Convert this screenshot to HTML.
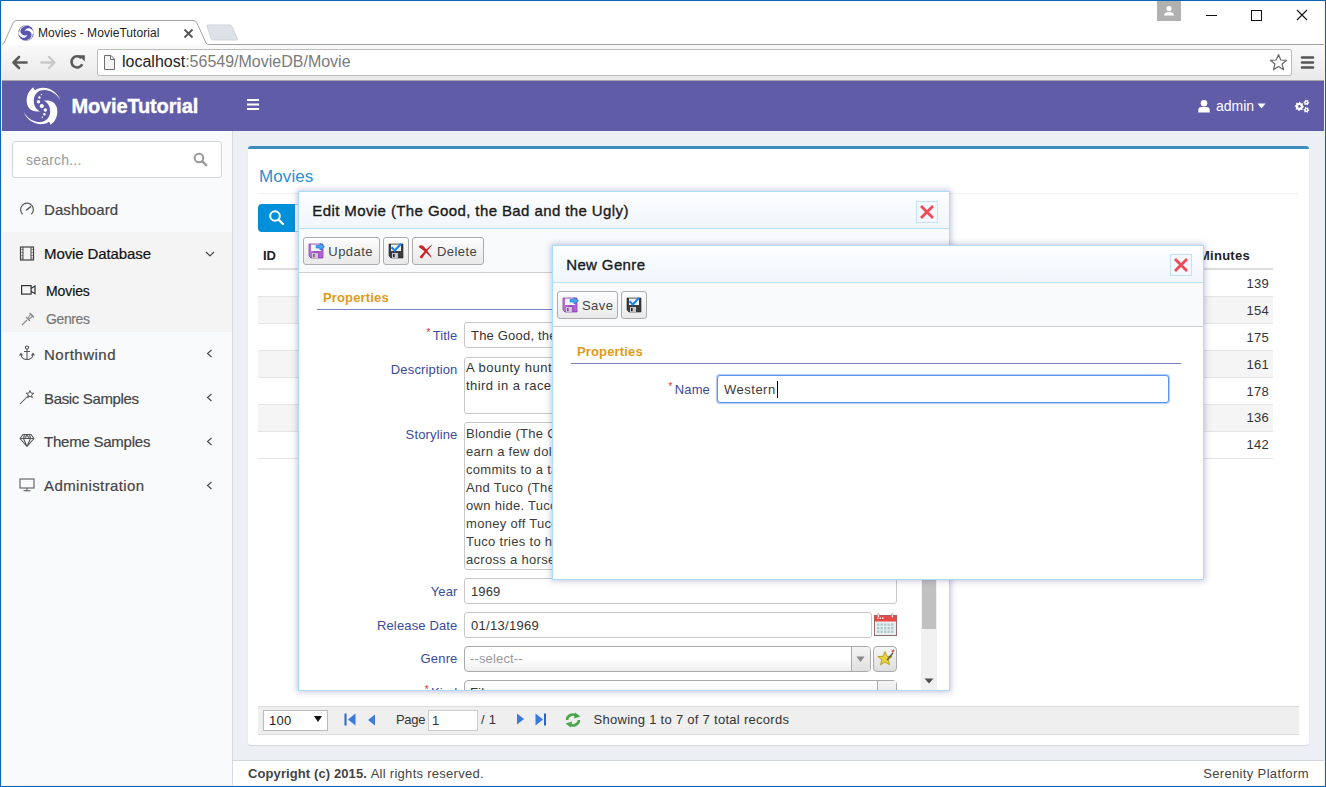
<!DOCTYPE html>
<html><head><meta charset="utf-8">
<style>
*{box-sizing:border-box;margin:0;padding:0}
html,body{width:1326px;height:787px;overflow:hidden;background:#fff;font-family:"Liberation Sans",sans-serif}
body{position:relative}
.a{position:absolute}
.t{position:absolute;white-space:nowrap;line-height:1}
</style></head>
<body>
<div class="a" style="left:0px;top:0px;width:1326px;height:44px;background:#fff"></div>
<svg class="a" style="left:0px;top:18px;" width="240" height="28" viewBox="0 0 240 28"><path d="M0,26.5 L1.5,26.5 Q3,26.5 4,25 L13.5,4 Q15,2.5 17,2.5 L193,2.5 Q195,2.5 196.5,4 L206,25 Q207,26.5 209,26.5 L240,26.5" fill="#fff" stroke="#a3a3a3" stroke-width="1"/><path d="M207,8 Q206,7 208,7 L229,7 Q231,7 232,8.5 L237,20 Q238,22 236,22 L214,22 Q212,22 211,20.5 Z" fill="#dde1e8" stroke="#cfd3da" stroke-width="1"/></svg>
<div class="a" style="left:240px;top:44px;width:1086px;height:1px;background:#a3a3a3"></div>
<svg class="a" style="left:18px;top:25px;" width="16" height="16" viewBox="0 0 16 16"><circle cx="8" cy="8" r="7.8" fill="#5a56ac"/><g transform="translate(0.2,0.2) scale(0.39) rotate(-60 20 20)"><path d="M11.3,1.2 C5.5,5.5 3.5,12.5 5.3,18.8 C6.8,23.5 11.5,26.3 18,25.3 C14,23.2 11.6,19.5 11.8,14.5 C12,9.5 14.6,6 18.5,4.6 C25.5,2.3 33.5,6.2 38.3,14 C35,5.5 26.5,1 19,2 C16.5,2.3 14.5,3.2 13,4.3 C12.2,3.2 11.6,2.2 11.3,1.2 Z" fill="#fff"/><path d="M11.3,1.2 C5.5,5.5 3.5,12.5 5.3,18.8 C6.8,23.5 11.5,26.3 18,25.3 C14,23.2 11.6,19.5 11.8,14.5 C12,9.5 14.6,6 18.5,4.6 C25.5,2.3 33.5,6.2 38.3,14 C35,5.5 26.5,1 19,2 C16.5,2.3 14.5,3.2 13,4.3 C12.2,3.2 11.6,2.2 11.3,1.2 Z" fill="#fff" transform="rotate(180 20 20)"/></g><circle cx="8" cy="8" r="1.6" fill="#5a56ac"/></svg>
<div class="t " style="top:27.14px;font-size:12px;color:#222;letter-spacing:0.05px;left:38px;">Movies - MovieTutorial</div>
<svg class="a" style="left:183px;top:28px;" width="11" height="11" viewBox="0 0 11 11"><path d="M1.5,1.5 L9.5,9.5 M9.5,1.5 L1.5,9.5" stroke="#555" stroke-width="1.8"/></svg>
<div class="a" style="left:1157px;top:1px;width:24px;height:20px;background:#b1b1b1"></div>
<svg class="a" style="left:1157px;top:1px;" width="24" height="20" viewBox="0 0 24 20"><circle cx="12" cy="7.5" r="2.6" fill="#fff"/><path d="M7,14.5 Q7,11 12,11 Q17,11 17,14.5 Z" fill="#fff"/></svg>
<div class="a" style="left:1206px;top:15px;width:11px;height:1px;background:#111"></div>
<div class="a" style="left:1251px;top:10px;width:11px;height:11px;border:1px solid #111"></div>
<svg class="a" style="left:1296px;top:9px;" width="12" height="12" viewBox="0 0 12 12"><path d="M1,1 L11,11 M11,1 L1,11" stroke="#111" stroke-width="1.1"/></svg>
<div class="a" style="left:2px;top:45px;width:1322px;height:35px;background:linear-gradient(#fafafa,#e9e9e9)"></div>
<div class="a" style="left:2px;top:80px;width:1322px;height:1px;background:#a8a8a8"></div>
<svg class="a" style="left:11px;top:55px;" width="17" height="15" viewBox="0 0 17 15"><path d="M15.5,7.5 L3,7.5 M8,2 L2.5,7.5 L8,13" fill="none" stroke="#5a5a5a" stroke-width="2.6" stroke-linecap="round" stroke-linejoin="round"/></svg>
<svg class="a" style="left:40px;top:55px;" width="17" height="15" viewBox="0 0 17 15"><path d="M1.5,7.5 L14,7.5 M9,2 L14.5,7.5 L9,13" fill="none" stroke="#c9c9c9" stroke-width="2.4" stroke-linecap="round" stroke-linejoin="round"/></svg>
<svg class="a" style="left:69px;top:54px;" width="17" height="16" viewBox="0 0 17 16"><path d="M13.2,10.2 A5.6,5.6 0 1 1 12.4,4.2" fill="none" stroke="#5a5a5a" stroke-width="2.6"/><path d="M9.5,1.2 L15.8,1.2 L15.8,7.5 Z" fill="#5a5a5a"/></svg>
<div class="a" style="left:97px;top:49px;width:1195px;height:27px;background:#fff;border:1px solid #bcbcbc;border-radius:2px"></div>
<svg class="a" style="left:103px;top:54px;" width="13" height="17" viewBox="0 0 13 17"><path d="M1.5,1.5 L8,1.5 L11.5,5 L11.5,15.5 L1.5,15.5 Z" fill="#f4f4f4" stroke="#6e6e6e" stroke-width="1"/><path d="M7.5,1.5 L7.5,5.5 L11.5,5.5" fill="none" stroke="#6e6e6e" stroke-width="1"/></svg>
<div class="t " style="top:54.06px;font-size:16px;color:#222;left:122px;"><span style="color:#222">localhost</span><span style="color:#7b7b7b">:56549/MovieDB/Movie</span></div>
<svg class="a" style="left:1269px;top:53px;" width="19" height="19" viewBox="0 0 19 19"><path d="M9.5,1.5 L11.8,7 L17.7,7.3 L13.1,11 L14.6,16.8 L9.5,13.6 L4.4,16.8 L5.9,11 L1.3,7.3 L7.2,7 Z" fill="none" stroke="#6a6a6a" stroke-width="1.2" stroke-linejoin="round"/></svg>
<svg class="a" style="left:1300px;top:55px;" width="15" height="15" viewBox="0 0 15 15"><path d="M2,2.5 L13,2.5 M2,7.5 L13,7.5 M2,12.5 L13,12.5" stroke="#555" stroke-width="2.6" stroke-linecap="round"/></svg>
<div class="a" style="left:2px;top:81px;width:1322px;height:50px;background:#605ca8"></div>
<svg class="a" style="left:22px;top:86px;" width="40" height="40" viewBox="0 0 40 40"><g fill="#fff"><path d="M11.3,1.2 C5.5,5.5 3.5,12.5 5.3,18.8 C6.8,23.5 11.5,26.3 18,25.3 C14,23.2 11.6,19.5 11.8,14.5 C12,9.5 14.6,6 18.5,4.6 C25.5,2.3 33.5,6.2 38.3,14 C35,5.5 26.5,1 19,2 C16.5,2.3 14.5,3.2 13,4.3 C12.2,3.2 11.6,2.2 11.3,1.2 Z"/><path d="M11.3,1.2 C5.5,5.5 3.5,12.5 5.3,18.8 C6.8,23.5 11.5,26.3 18,25.3 C14,23.2 11.6,19.5 11.8,14.5 C12,9.5 14.6,6 18.5,4.6 C25.5,2.3 33.5,6.2 38.3,14 C35,5.5 26.5,1 19,2 C16.5,2.3 14.5,3.2 13,4.3 C12.2,3.2 11.6,2.2 11.3,1.2 Z" transform="rotate(180 20 20)"/><circle cx="19.8" cy="20.1" r="2.1"/><circle cx="16.5" cy="15.8" r="1.7"/><circle cx="23.3" cy="24" r="1.7"/><circle cx="17.4" cy="11.5" r="1.2"/><circle cx="22.4" cy="28.2" r="1.2"/><circle cx="19.5" cy="8.5" r="0.75"/><circle cx="20.3" cy="31.3" r="0.75"/></g></svg>
<div class="t " style="top:95.57px;font-size:20px;color:#fff;font-weight:bold;letter-spacing:-0.15px;left:71.5px;-webkit-text-stroke:0.4px #fff;">MovieTutorial</div>
<svg class="a" style="left:246px;top:98px;" width="14" height="13" viewBox="0 0 14 13"><path d="M1,2 L13,2 M1,6.5 L13,6.5 M1,11 L13,11" stroke="#fff" stroke-width="2"/></svg>
<svg class="a" style="left:1197px;top:99px;" width="14" height="14" viewBox="0 0 14 14"><circle cx="7" cy="4.2" r="3.3" fill="#fff"/><path d="M1.3,13.5 L1.3,11 Q1.3,8 4.5,8 L9.5,8 Q12.7,8 12.7,11 L12.7,13.5 Z" fill="#fff"/></svg>
<div class="t " style="top:99.15px;font-size:14px;color:#fff;left:1216px;">admin</div>
<svg class="a" style="left:1257px;top:103px;" width="9" height="6" viewBox="0 0 9 6"><path d="M0.5,0.5 L8.5,0.5 L4.5,5.5 Z" fill="#fff"/></svg>
<svg class="a" style="left:1293px;top:98px;" width="18" height="18" viewBox="0 0 18 18"><polygon points="11.00,8.40 10.91,9.30 9.63,9.74 9.31,10.34 9.65,11.65 8.96,12.22 7.74,11.63 7.08,11.83 6.40,13.00 5.50,12.91 5.06,11.63 4.46,11.31 3.15,11.65 2.58,10.96 3.17,9.74 2.97,9.08 1.80,8.40 1.89,7.50 3.17,7.06 3.49,6.46 3.15,5.15 3.84,4.58 5.06,5.17 5.72,4.97 6.40,3.80 7.30,3.89 7.74,5.17 8.34,5.49 9.65,5.15 10.22,5.84 9.63,7.06 9.83,7.72" fill="#fff"/><circle cx="6.4" cy="8.4" r="3.2" fill="#fff"/><circle cx="6.4" cy="8.4" r="1.3" fill="#605ca8"/><polygon points="16.30,4.50 16.20,5.25 15.22,5.55 14.88,5.98 14.85,7.01 14.15,7.30 13.40,6.60 12.86,6.53 11.95,7.01 11.35,6.55 11.58,5.55 11.37,5.04 10.50,4.50 10.60,3.75 11.58,3.45 11.92,3.02 11.95,1.99 12.65,1.70 13.40,2.40 13.94,2.47 14.85,1.99 15.45,2.45 15.22,3.45 15.43,3.96" fill="#fff"/><circle cx="13.4" cy="4.5" r="1.8" fill="#fff"/><circle cx="13.4" cy="4.5" r="0.8" fill="#605ca8"/><polygon points="16.30,11.90 16.20,12.65 15.22,12.95 14.88,13.38 14.85,14.41 14.15,14.70 13.40,14.00 12.86,13.93 11.95,14.41 11.35,13.95 11.58,12.95 11.37,12.44 10.50,11.90 10.60,11.15 11.58,10.85 11.92,10.42 11.95,9.39 12.65,9.10 13.40,9.80 13.94,9.87 14.85,9.39 15.45,9.85 15.22,10.85 15.43,11.36" fill="#fff"/><circle cx="13.4" cy="11.9" r="1.8" fill="#fff"/><circle cx="13.4" cy="11.9" r="0.8" fill="#605ca8"/></svg>
<div class="a" style="left:2px;top:131px;width:230px;height:656px;background:#f9fafc"></div>
<div class="a" style="left:232px;top:131px;width:1px;height:656px;background:#d5d9e0"></div>
<div class="a" style="left:2px;top:232px;width:230px;height:100px;background:#f4f4f5"></div>
<div class="a" style="left:12px;top:141px;width:210px;height:37px;background:#fff;border:1px solid #d2d6de;border-radius:3px"></div>
<div class="t " style="top:152.65px;font-size:14px;color:#999;letter-spacing:0.2px;left:26px;">search...</div>
<svg class="a" style="left:193px;top:152px;" width="15" height="15" viewBox="0 0 15 15"><circle cx="6" cy="6" r="4.3" fill="none" stroke="#999" stroke-width="2"/><path d="M9.3,9.3 L13.2,13.2" stroke="#999" stroke-width="2.4" stroke-linecap="round"/></svg>
<div class="t " style="top:201.80px;font-size:15px;color:#444;letter-spacing:0.1px;left:44px;-webkit-text-stroke:0.2px #444;">Dashboard</div>
<div class="t " style="top:246.30px;font-size:15px;color:#111;letter-spacing:-0.1px;left:44px;-webkit-text-stroke:0.2px #111;">Movie Database</div>
<div class="t " style="top:283.55px;font-size:14px;color:#111;letter-spacing:-0.1px;left:46px;-webkit-text-stroke:0.2px #111;">Movies</div>
<div class="t " style="top:311.55px;font-size:14px;color:#777;letter-spacing:-0.4px;left:46px;-webkit-text-stroke:0.2px #777;">Genres</div>
<div class="t " style="top:346.60px;font-size:15px;color:#444;letter-spacing:0.5px;left:44px;-webkit-text-stroke:0.2px #444;">Northwind</div>
<div class="t " style="top:390.60px;font-size:15px;color:#444;letter-spacing:-0.35px;left:44px;-webkit-text-stroke:0.2px #444;">Basic Samples</div>
<div class="t " style="top:434.30px;font-size:15px;color:#444;letter-spacing:-0.23px;left:44px;-webkit-text-stroke:0.2px #444;">Theme Samples</div>
<div class="t " style="top:478.30px;font-size:15px;color:#444;letter-spacing:0.39px;left:44px;-webkit-text-stroke:0.2px #444;">Administration</div>
<svg class="a" style="left:19px;top:201px;" width="16" height="15" viewBox="0 0 16 15"><path d="M3.6,13.2 A6.4,6.4 0 1 1 12.4,13.2" fill="none" stroke="#555" stroke-width="1.2"/><path d="M7.5,9 L11.5,5.8" stroke="#555" stroke-width="1.5" stroke-linecap="round"/></svg>
<svg class="a" style="left:19px;top:246px;" width="16" height="15" viewBox="0 0 16 15"><rect x="1.5" y="1" width="13" height="13" fill="none" stroke="#444" stroke-width="1.2"/><path d="M4,1 L4,14 M12,1 L12,14" stroke="#444" stroke-width="1"/><path d="M2.5,3.5 L3.5,3.5 M2.5,6.5 L3.5,6.5 M2.5,9.5 L3.5,9.5 M2.5,12 L3.5,12 M12.5,3.5 L13.5,3.5 M12.5,6.5 L13.5,6.5 M12.5,9.5 L13.5,9.5 M12.5,12 L13.5,12" stroke="#444" stroke-width="1"/></svg>
<svg class="a" style="left:21px;top:285px;" width="15" height="10" viewBox="0 0 15 10"><rect x="0.6" y="0.6" width="9.5" height="8.5" fill="none" stroke="#333" stroke-width="1.2"/><path d="M10,3.5 L14,1 L14,8.7 L10,6.2" fill="none" stroke="#333" stroke-width="1.2"/></svg>
<svg class="a" style="left:21px;top:311px;" width="15" height="15" viewBox="0 0 15 15"><path d="M1,14 L6,9 M5,6 L9,10 M6.5,7.5 L10,3 L12,5 L7.5,8.5 M8.5,2 L13,6.5" fill="none" stroke="#888" stroke-width="1.1"/></svg>
<svg class="a" style="left:19px;top:345px;" width="16" height="16" viewBox="0 0 16 16"><circle cx="8" cy="2.6" r="1.6" fill="none" stroke="#555" stroke-width="1.1"/><path d="M8,4.2 L8,14.5 M5,6.5 L11,6.5 M2,9.5 Q2.5,14.5 8,14.5 Q13.5,14.5 14,9.5" fill="none" stroke="#555" stroke-width="1.05"/><path d="M0.5,10.5 L2,8.5 L3.5,10.5 M12.5,10.5 L14,8.5 L15.5,10.5" fill="none" stroke="#555" stroke-width="1.1"/></svg>
<svg class="a" style="left:19px;top:389px;" width="16" height="16" viewBox="0 0 16 16"><path d="M1,15 L9.5,6.5" stroke="#555" stroke-width="1.05"/><path d="M11,1.5 L12,4 L14.8,4.3 L12.6,6 L13.3,8.7 L11,7.2 L8.7,8.7 L9.4,6 L7.2,4.3 L10,4 Z" fill="none" stroke="#555" stroke-width="1"/></svg>
<svg class="a" style="left:19px;top:433px;" width="16" height="15" viewBox="0 0 16 15"><path d="M4,1.5 L12,1.5 L15,5.5 L8,13.5 L1,5.5 Z M1,5.5 L15,5.5 M5.5,1.5 L4.5,5.5 L8,13.5 L11.5,5.5 L10.5,1.5 M8,1.5 L6,5.5 M8,1.5 L10,5.5" fill="none" stroke="#555" stroke-width="1.1" stroke-linejoin="round"/></svg>
<svg class="a" style="left:19px;top:478px;" width="16" height="14" viewBox="0 0 16 14"><rect x="1" y="1" width="14" height="9" fill="none" stroke="#555" stroke-width="1.05"/><path d="M8,10 L8,12.5 M4.5,12.8 L11.5,12.8" stroke="#555" stroke-width="1.05"/></svg>
<svg class="a" style="left:205px;top:251px;" width="10" height="7" viewBox="0 0 10 7"><path d="M1,1 L5,5 L9,1" fill="none" stroke="#444" stroke-width="1.1"/></svg>
<svg class="a" style="left:206px;top:349px;" width="7" height="9" viewBox="0 0 7 9"><path d="M5.5,1 L1.5,4.5 L5.5,8" fill="none" stroke="#444" stroke-width="1.1"/></svg>
<svg class="a" style="left:206px;top:393px;" width="7" height="9" viewBox="0 0 7 9"><path d="M5.5,1 L1.5,4.5 L5.5,8" fill="none" stroke="#444" stroke-width="1.1"/></svg>
<svg class="a" style="left:206px;top:437px;" width="7" height="9" viewBox="0 0 7 9"><path d="M5.5,1 L1.5,4.5 L5.5,8" fill="none" stroke="#444" stroke-width="1.1"/></svg>
<svg class="a" style="left:206px;top:481px;" width="7" height="9" viewBox="0 0 7 9"><path d="M5.5,1 L1.5,4.5 L5.5,8" fill="none" stroke="#444" stroke-width="1.1"/></svg>
<div class="a" style="left:233px;top:131px;width:1091px;height:629px;background:#ecf0f5"></div>
<div class="a" style="left:248px;top:146px;width:1061px;height:599px;background:#fff;border-top:3px solid #3c8dbc;border-radius:3px;box-shadow:0 1px 1px rgba(0,0,0,0.1)"></div>
<div class="t " style="top:167.61px;font-size:17px;color:#2a8fd6;letter-spacing:0.1px;left:259px;">Movies</div>
<div class="a" style="left:258px;top:193px;width:1041px;height:1px;background:#f0f0f0"></div>
<div class="a" style="left:294px;top:204px;width:120px;height:28px;background:#fff;border:1px solid #ccc"></div>
<div class="a" style="left:258px;top:204px;width:37px;height:28px;background:#0090d9;border-radius:4px 0 0 4px"></div>
<svg class="a" style="left:267.5px;top:209px;" width="18" height="18" viewBox="0 0 18 18"><circle cx="7" cy="7" r="4.8" fill="none" stroke="#fff" stroke-width="2"/><path d="M10.5,10.5 L15,15" stroke="#fff" stroke-width="2.4" stroke-linecap="round"/></svg>
<div class="t " style="top:249.00px;font-size:13px;color:#222;font-weight:bold;left:263px;">ID</div>
<div class="t " style="top:249.00px;font-size:13px;color:#222;font-weight:bold;letter-spacing:0.25px;left:1199px;">Minutes</div>
<div class="a" style="left:258px;top:268px;width:1015px;height:2px;background:#ddd"></div>
<div class="a" style="left:258px;top:270px;width:1015px;height:27px;background:#fff;border-bottom:1px solid #e4e4e4"></div>
<div class="a" style="left:258px;top:297px;width:1015px;height:27px;background:#f5f5f5;border-bottom:1px solid #e4e4e4"></div>
<div class="a" style="left:258px;top:324px;width:1015px;height:27px;background:#fff;border-bottom:1px solid #e4e4e4"></div>
<div class="a" style="left:258px;top:351px;width:1015px;height:27px;background:#f5f5f5;border-bottom:1px solid #e4e4e4"></div>
<div class="a" style="left:258px;top:378px;width:1015px;height:27px;background:#fff;border-bottom:1px solid #e4e4e4"></div>
<div class="a" style="left:258px;top:405px;width:1015px;height:27px;background:#f5f5f5;border-bottom:1px solid #e4e4e4"></div>
<div class="a" style="left:258px;top:432px;width:1015px;height:27px;background:#fff;border-bottom:1px solid #e4e4e4"></div>
<div class="t " style="top:276.90px;font-size:13px;color:#333;letter-spacing:0.3px;right:57.00px;">139</div>
<div class="t " style="top:303.80px;font-size:13px;color:#333;letter-spacing:0.3px;right:57.00px;">154</div>
<div class="t " style="top:330.70px;font-size:13px;color:#333;letter-spacing:0.3px;right:57.00px;">175</div>
<div class="t " style="top:357.60px;font-size:13px;color:#333;letter-spacing:0.3px;right:57.00px;">161</div>
<div class="t " style="top:384.50px;font-size:13px;color:#333;letter-spacing:0.3px;right:57.00px;">178</div>
<div class="t " style="top:411.40px;font-size:13px;color:#333;letter-spacing:0.3px;right:57.00px;">136</div>
<div class="t " style="top:438.30px;font-size:13px;color:#333;letter-spacing:0.3px;right:57.00px;">142</div>
<div class="a" style="left:258px;top:706px;width:1041px;height:29px;background:#efefef;border-top:1px solid #ddd;border-bottom:1px solid #ddd"></div>
<div class="a" style="left:263px;top:710px;width:65px;height:21px;background:#fff;border:1px solid #bbb"></div>
<div class="t " style="top:714.00px;font-size:13px;color:#222;letter-spacing:0.3px;left:269px;">100</div>
<svg class="a" style="left:314px;top:716px;" width="8" height="6" viewBox="0 0 8 6"><path d="M0,0 L8,0 L4,6 Z" fill="#111"/></svg>
<svg class="a" style="left:344px;top:713px;" width="12" height="13" viewBox="0 0 12 13"><rect x="0.5" y="0.5" width="2" height="12" fill="#2a64c8"/><path d="M11.5,0.5 L4,6.5 L11.5,12.5 Z" fill="#3a7ae0"/></svg>
<svg class="a" style="left:367px;top:714px;" width="9" height="12" viewBox="0 0 9 12"><path d="M8,0.5 L1,6 L8,11.5 Z" fill="#3a7ae0"/></svg>
<div class="t " style="top:713.00px;font-size:13px;color:#333;letter-spacing:-0.3px;left:396px;">Page</div>
<div class="a" style="left:428px;top:710px;width:50px;height:21px;background:#fff;border:1px solid #ccc"></div>
<div class="t " style="top:714.00px;font-size:13px;color:#333;left:432px;">1</div>
<div class="t " style="top:713.00px;font-size:13px;color:#333;letter-spacing:0.3px;left:481px;">/ 1</div>
<svg class="a" style="left:516px;top:713px;" width="9" height="12" viewBox="0 0 9 12"><path d="M1,0.5 L8,6 L1,11.5 Z" fill="#3a7ae0"/></svg>
<svg class="a" style="left:535px;top:713px;" width="12" height="13" viewBox="0 0 12 13"><path d="M0.5,0.5 L8,6.5 L0.5,12.5 Z" fill="#3a7ae0"/><rect x="9" y="0.5" width="2" height="12" fill="#2a64c8"/></svg>
<svg class="a" style="left:564px;top:712px;" width="18" height="16" viewBox="0 0 18 16"><path d="M3,8 A6,5.5 0 0 1 13,4" fill="none" stroke="#4aa64a" stroke-width="2.6"/><path d="M11,0.5 L16.5,4.5 L10,6.5 Z" fill="#4aa64a"/><path d="M15,8 A6,5.5 0 0 1 5,12" fill="none" stroke="#4aa64a" stroke-width="2.6"/><path d="M7,15.5 L1.5,11.5 L8,9.5 Z" fill="#4aa64a"/></svg>
<div class="t " style="top:712.70px;font-size:13px;color:#333;letter-spacing:0.28px;left:593.5px;">Showing 1 to 7 of 7 total records</div>
<div class="a" style="left:233px;top:760px;width:1091px;height:1px;background:#d2d6de"></div>
<div class="a" style="left:233px;top:761px;width:1091px;height:25px;background:#fff"></div>
<div class="t " style="top:766.50px;font-size:13px;color:#444;letter-spacing:0.1px;left:248px;"><b>Copyright (c) 2015.</b> <span style="letter-spacing:0.28px">All rights reserved.</span></div>
<div class="t " style="top:766.50px;font-size:13px;color:#444;letter-spacing:0.35px;right:17.20px;">Serenity Platform</div>
<div class="a" style="left:0;top:0;width:1326px;height:787px;z-index:10">
<div class="a" style="left:298px;top:191px;width:652px;height:500px;background:#fff;border:1px solid #a8dcf8;box-shadow:0 0 6px 1px rgba(70,70,150,0.32)"></div>
<div class="a" style="left:299px;top:192px;width:650px;height:36px;background:linear-gradient(#fdfeff,#f0f6fc)"></div>
<div class="a" style="left:299px;top:228px;width:650px;height:1px;background:#b8e0f8"></div>
<div class="a" style="left:299px;top:229px;width:650px;height:43px;background:#f9fafc"></div>
<div class="a" style="left:299px;top:272px;width:650px;height:1px;background:#cfcfcf"></div>
<div class="t " style="top:203.10px;font-size:15px;color:#1a1a1a;letter-spacing:0.4px;left:312.3px;-webkit-text-stroke:0.35px #1a1a1a;">Edit Movie (The Good, the Bad and the Ugly)</div>
<div class="a" style="left:916px;top:201px;width:22px;height:22px;background:#f2f8fd;border:1px solid #c5e1f5"></div>
<svg class="a" style="left:920px;top:205px;" width="14" height="14" viewBox="0 0 14 14"><path d="M2,2 L12,12 M12,2 L2,12" stroke="#f04a55" stroke-width="2.8" stroke-linecap="square"/></svg>
<div class="a" style="left:303px;top:237px;width:77px;height:28px;background:linear-gradient(#fdfdfd,#e9e9e9);border:1px solid #adadad;border-radius:3px"></div>
<svg class="a" style="left:308px;top:243px;" width="17" height="16" viewBox="0 0 17 16"><defs><linearGradient id="fp" x1="0" x2="1"><stop offset="0" stop-color="#c27ee0"/><stop offset="0.5" stop-color="#9a48bf"/><stop offset="1" stop-color="#b86ed8"/></linearGradient></defs><path d="M1,1 L15,1 L15,15 L3,15 L1,13 Z" fill="url(#fp)" stroke="#7a2fa0" stroke-width="0.7"/><rect x="3" y="1.5" width="10" height="6.5" fill="#eef5f4"/><rect x="4" y="10" width="6" height="5" fill="#c9c9cf"/><rect x="5" y="11" width="1.6" height="3.2" fill="#9040b0"/><path d="M8.2,2.4 L12,2.4 L12,0.5 L16.5,3.7 L12,7 L12,5 L8.2,5 Z" fill="#46aaf2" stroke="#1f6fd0" stroke-width="0.7"/></svg>
<div class="t " style="top:244.70px;font-size:13px;color:#444;letter-spacing:0.45px;left:328.3px;">Update</div>
<div class="a" style="left:383px;top:237px;width:26px;height:28px;background:linear-gradient(#fdfdfd,#e9e9e9);border:1px solid #adadad;border-radius:3px"></div>
<svg class="a" style="left:388px;top:243px;" width="16" height="16" viewBox="0 0 16 16"><path d="M1,1 L15,1 L15,15 L3,15 L1,13 Z" fill="#3c3c3c" stroke="#222" stroke-width="0.6"/><rect x="3" y="1.5" width="10" height="6.5" fill="#eef6f6"/><rect x="4" y="10" width="6" height="5" fill="#c8c8d2"/><rect x="5" y="11" width="1.6" height="3.2" fill="#202020"/><path d="M3.5,4.2 L6.8,7.5 L13,0.8" fill="none" stroke="#1a80f0" stroke-width="2"/></svg>
<div class="a" style="left:412px;top:237px;width:72px;height:28px;background:linear-gradient(#fdfdfd,#e9e9e9);border:1px solid #adadad;border-radius:3px"></div>
<svg class="a" style="left:418px;top:244px;" width="16" height="16" viewBox="0 0 16 16"><path d="M1.8,12.8 Q6.5,6.5 13.6,0.8 L14,1.3 Q8.5,7.5 4.2,14.2 Q2.5,14.8 1.8,12.8 Z" fill="#d41e22"/><path d="M0.8,2.6 Q2.5,0.3 5,1.8 Q9.5,6 13.6,13.2 L13,13.5 Q8,8.2 2.8,4.6 Q0.8,3.8 0.8,2.6 Z" fill="#c4262a"/></svg>
<div class="t " style="top:244.70px;font-size:13px;color:#444;letter-spacing:0.45px;left:437px;">Delete</div>
<div class="a" style="left:299px;top:273px;width:650px;height:417px;overflow:hidden;background:#fff">
<div class="t " style="top:18.00px;font-size:13px;color:#e09a1a;font-weight:bold;letter-spacing:0.15px;left:24px;">Properties</div>
<div class="a" style="left:18px;top:36px;width:610px;height:1px;background:#7a80c8"></div>
<div class="t" style="left:-41.5px;width:200px;text-align:right;top:56.00px;font-size:13px;color:#3b4a9e;letter-spacing:0.15px"><span style="color:#e53b3b;font-size:11px;position:relative;top:-4px;margin-right:2px">*</span>Title</div>
<div class="t" style="left:-41.5px;width:200px;text-align:right;top:89.60px;font-size:13px;color:#3b4a9e;letter-spacing:0.15px">Description</div>
<div class="t" style="left:-41.5px;width:200px;text-align:right;top:155.00px;font-size:13px;color:#3b4a9e;letter-spacing:0.15px">Storyline</div>
<div class="t" style="left:-41.5px;width:200px;text-align:right;top:311.60px;font-size:13px;color:#3b4a9e;letter-spacing:0.15px">Year</div>
<div class="t" style="left:-41.5px;width:200px;text-align:right;top:345.50px;font-size:13px;color:#3b4a9e;letter-spacing:0.15px">Release Date</div>
<div class="t" style="left:-41.5px;width:200px;text-align:right;top:379.30px;font-size:13px;color:#3b4a9e;letter-spacing:0.15px">Genre</div>
<div class="t" style="left:-41.5px;width:200px;text-align:right;top:413.20px;font-size:13px;color:#3b4a9e;letter-spacing:0.15px"><span style="color:#e53b3b;font-size:11px;position:relative;top:-4px;margin-right:2px">*</span>Kind</div>
<div class="a" style="left:165px;top:49px;width:433px;height:26px;background:#fff;border:1px solid #c8c8c8;border-radius:3px"></div>
<div class="t " style="top:56.00px;font-size:13px;color:#333;letter-spacing:0.2px;left:172px;">The Good, the Bad and the Ugly</div>
<div class="a" style="left:165px;top:84px;width:433px;height:57px;background:#fff;border:1px solid #c8c8c8;border-radius:3px"></div>
<div class="t " style="top:87.50px;font-size:13px;color:#333;letter-spacing:0.5px;left:167px;">A bounty hunting scam joins two men in an uneasy alliance against a</div>
<div class="t " style="top:105.50px;font-size:13px;color:#333;letter-spacing:0.45px;left:167px;">third in a race to find a fortune in gold buried in a remote cemetery.</div>
<div class="a" style="left:165px;top:149px;width:433px;height:148px;background:#fff;border:1px solid #c8c8c8;border-radius:3px"></div>
<div class="t " style="top:153.90px;font-size:13px;color:#3c3c3c;letter-spacing:0.3px;left:167px;">Blondie (The Good) is a professional gunslinger who is out trying to</div>
<div class="t " style="top:171.90px;font-size:13px;color:#3c3c3c;letter-spacing:0.3px;left:167px;">earn a few dollars. Angel Eyes (The Bad) is a hit man who always</div>
<div class="t " style="top:189.90px;font-size:13px;color:#3c3c3c;letter-spacing:0.3px;left:167px;">commits to a task and sees it through, as long as he is paid to do so.</div>
<div class="t " style="top:207.90px;font-size:13px;color:#3c3c3c;letter-spacing:0.3px;left:167px;">And Tuco (The Ugly) is a wanted outlaw trying to take care of his</div>
<div class="t " style="top:225.90px;font-size:13px;color:#3c3c3c;letter-spacing:0.3px;left:167px;">own hide. Tuco and Blondie share a partnership together making</div>
<div class="t " style="top:243.90px;font-size:13px;color:#3c3c3c;letter-spacing:0.3px;left:167px;">money off Tuco's bounty, but when Blondie unties the partnership,</div>
<div class="t " style="top:261.90px;font-size:13px;color:#3c3c3c;letter-spacing:0.3px;left:167px;">Tuco tries to hunt down Blondie. When Blondie and Tuco come</div>
<div class="t " style="top:279.90px;font-size:13px;color:#3c3c3c;letter-spacing:0.3px;left:167px;">across a horse carriage loaded with dead bodies, they soon learn</div>
<div class="a" style="left:165px;top:305px;width:433px;height:26px;background:#fff;border:1px solid #c8c8c8;border-radius:3px"></div>
<div class="t " style="top:311.60px;font-size:13px;color:#333;letter-spacing:0.1px;left:172px;">1969</div>
<div class="a" style="left:165px;top:339px;width:408px;height:26px;background:#fff;border:1px solid #c8c8c8;border-radius:3px"></div>
<div class="t " style="top:345.50px;font-size:13px;color:#333;letter-spacing:0.3px;left:172px;">01/13/1969</div>
<svg class="a" style="left:575px;top:340px;" width="23" height="23" viewBox="0 0 23 23"><rect x="0.5" y="2.5" width="22" height="20" fill="#e6f0f0" stroke="#8a6a6a" stroke-width="1"/><rect x="0.5" y="2.5" width="22" height="6" fill="#e84848"/><g fill="#fff"><rect x="3" y="4.5" width="1.5" height="1.3"/><rect x="5.5" y="4.5" width="1.5" height="1.3"/><rect x="8" y="4.5" width="1.5" height="1.3"/></g><g fill="#b4c8cc"><rect x="3.0" y="10.5" width="2.4" height="2.4"/><rect x="3.0" y="14.0" width="2.4" height="2.4"/><rect x="3.0" y="17.5" width="2.4" height="2.4"/><rect x="6.5" y="10.5" width="2.4" height="2.4"/><rect x="6.5" y="14.0" width="2.4" height="2.4"/><rect x="6.5" y="17.5" width="2.4" height="2.4"/><rect x="10.0" y="10.5" width="2.4" height="2.4"/><rect x="10.0" y="14.0" width="2.4" height="2.4"/><rect x="10.0" y="17.5" width="2.4" height="2.4"/><rect x="13.5" y="10.5" width="2.4" height="2.4"/><rect x="13.5" y="14.0" width="2.4" height="2.4"/><rect x="13.5" y="17.5" width="2.4" height="2.4"/><rect x="17.0" y="10.5" width="2.4" height="2.4"/><rect x="17.0" y="14.0" width="2.4" height="2.4"/><rect x="17.0" y="17.5" width="2.4" height="2.4"/></g><rect x="3.5" y="0.5" width="1.6" height="4" rx="0.8" fill="#fff" stroke="#888" stroke-width="0.6"/><rect x="17.5" y="0.5" width="1.6" height="4" rx="0.8" fill="#fff" stroke="#888" stroke-width="0.6"/></svg>
<div class="a" style="left:165px;top:373px;width:407px;height:26px;background:linear-gradient(#fff 0%,#fff 50%,#eee 100%);border:1px solid #aaa;border-radius:4px"></div>
<div class="a" style="left:552px;top:374px;width:19px;height:24px;background:linear-gradient(#f4f4f4,#e0e0e0);border-left:1px solid #aaa;border-radius:0 3px 3px 0"></div>
<svg class="a" style="left:557px;top:383px;" width="9" height="7" viewBox="0 0 9 7"><path d="M0.5,0.5 L8.5,0.5 L4.5,6 Z" fill="#888"/></svg>
<div class="t " style="top:379.30px;font-size:13px;color:#999;letter-spacing:0.15px;left:171px;">--select--</div>
<div class="a" style="left:574px;top:373px;width:24px;height:26px;background:linear-gradient(#f6f6f6,#dedede);border:1px solid #aaa;border-radius:4px"></div>
<svg class="a" style="left:577px;top:376px;" width="19" height="19" viewBox="0 0 19 19"><path d="M9,2.5 L11,7.3 L16.2,7.6 L12.2,10.8 L13.5,15.8 L9,13 L4.5,15.8 L5.8,10.8 L1.8,7.6 L7,7.3 Z" fill="#e8d43a" stroke="#a8941a" stroke-width="0.8"/><path d="M11,11 L17,4" stroke="#555" stroke-width="1.3"/><path d="M16,3 L18,1" stroke="#e05050" stroke-width="1.8"/></svg>
<div class="a" style="left:165px;top:407px;width:433px;height:26px;background:linear-gradient(#fff,#eee);border:1px solid #aaa;border-radius:4px"></div>
<div class="a" style="left:578px;top:408px;width:19px;height:24px;background:linear-gradient(#f4f4f4,#e0e0e0);border-left:1px solid #aaa"></div>
<div class="t " style="top:413.20px;font-size:13px;color:#333;letter-spacing:0.15px;left:171px;">Film</div>
<div class="a" style="left:622px;top:0px;width:16px;height:417px;background:#f1f1f1"></div>
<div class="a" style="left:623px;top:17px;width:14px;height:339px;background:#c1c1c1"></div>
<svg class="a" style="left:625px;top:405px;" width="10" height="7" viewBox="0 0 10 7"><path d="M0.5,0.5 L9.5,0.5 L5,5.5 Z" fill="#505050"/></svg>
</div>
</div>
<div class="a" style="left:0;top:0;width:1326px;height:787px;z-index:20">
<div class="a" style="left:552px;top:245px;width:652px;height:335px;background:#fff;border:1px solid #a8dcf8;box-shadow:0 0 6px 1px rgba(70,70,150,0.32)"></div>
<div class="a" style="left:553px;top:246px;width:650px;height:36px;background:linear-gradient(#fdfeff,#f0f6fc)"></div>
<div class="a" style="left:553px;top:282px;width:650px;height:1px;background:#b8e0f8"></div>
<div class="a" style="left:553px;top:283px;width:650px;height:43px;background:#f9fafc"></div>
<div class="a" style="left:553px;top:326px;width:650px;height:1px;background:#cfcfcf"></div>
<div class="t " style="top:256.90px;font-size:15px;color:#1a1a1a;letter-spacing:0.37px;left:566.2px;-webkit-text-stroke:0.35px #1a1a1a;">New Genre</div>
<div class="a" style="left:1170px;top:254px;width:22px;height:22px;background:#f2f8fd;border:1px solid #c5e1f5"></div>
<svg class="a" style="left:1174px;top:258px;" width="14" height="14" viewBox="0 0 14 14"><path d="M2,2 L12,12 M12,2 L2,12" stroke="#f04a55" stroke-width="2.8" stroke-linecap="square"/></svg>
<div class="a" style="left:557px;top:291px;width:61px;height:28px;background:linear-gradient(#fdfdfd,#e9e9e9);border:1px solid #adadad;border-radius:3px"></div>
<svg class="a" style="left:562px;top:297px;" width="17" height="16" viewBox="0 0 17 16"><defs><linearGradient id="fp" x1="0" x2="1"><stop offset="0" stop-color="#c27ee0"/><stop offset="0.5" stop-color="#9a48bf"/><stop offset="1" stop-color="#b86ed8"/></linearGradient></defs><path d="M1,1 L15,1 L15,15 L3,15 L1,13 Z" fill="url(#fp)" stroke="#7a2fa0" stroke-width="0.7"/><rect x="3" y="1.5" width="10" height="6.5" fill="#eef5f4"/><rect x="4" y="10" width="6" height="5" fill="#c9c9cf"/><rect x="5" y="11" width="1.6" height="3.2" fill="#9040b0"/><path d="M8.2,2.4 L12,2.4 L12,0.5 L16.5,3.7 L12,7 L12,5 L8.2,5 Z" fill="#46aaf2" stroke="#1f6fd0" stroke-width="0.7"/></svg>
<div class="t " style="top:298.70px;font-size:13px;color:#444;letter-spacing:0.45px;left:582px;">Save</div>
<div class="a" style="left:621px;top:291px;width:26px;height:28px;background:linear-gradient(#fdfdfd,#e9e9e9);border:1px solid #adadad;border-radius:3px"></div>
<svg class="a" style="left:626px;top:297px;" width="16" height="16" viewBox="0 0 16 16"><path d="M1,1 L15,1 L15,15 L3,15 L1,13 Z" fill="#3c3c3c" stroke="#222" stroke-width="0.6"/><rect x="3" y="1.5" width="10" height="6.5" fill="#eef6f6"/><rect x="4" y="10" width="6" height="5" fill="#c8c8d2"/><rect x="5" y="11" width="1.6" height="3.2" fill="#202020"/><path d="M3.5,4.2 L6.8,7.5 L13,0.8" fill="none" stroke="#1a80f0" stroke-width="2"/></svg>
<div class="t " style="top:345.00px;font-size:13px;color:#e09a1a;font-weight:bold;letter-spacing:0.15px;left:577px;">Properties</div>
<div class="a" style="left:571px;top:363px;width:610px;height:1px;background:#7a80c8"></div>
<div class="t" style="left:510px;width:200px;text-align:right;top:383.00px;font-size:13px;color:#3b4a9e;letter-spacing:0.15px"><span style="color:#e53b3b;font-size:11px;position:relative;top:-4px;margin-right:2px">*</span>Name</div>
<div class="a" style="left:717px;top:375px;width:452px;height:28px;background:#fff;border:1px solid #5b95ea;border-radius:3px;box-shadow:0 0 1px 1px rgba(110,160,240,0.55)"></div>
<div class="t " style="top:383.00px;font-size:13px;color:#3a3a3a;letter-spacing:0.5px;left:724px;">Western</div>
<div class="a" style="left:777px;top:381px;width:1px;height:17px;background:#000"></div>
</div>
<div class="a" style="left:1px;top:0px;width:1324px;height:786px;border-left:1px solid #f3efea;border-right:1px solid #f3efea;border-bottom:1px solid #f3efea;z-index:49;background:transparent"></div>
<div class="a" style="left:0px;top:0px;width:1326px;height:1px;background:#0e63b3;z-index:50"></div>
<div class="a" style="left:0px;top:0px;width:1px;height:787px;background:#0e63b3;z-index:50"></div>
<div class="a" style="left:1325px;top:0px;width:1px;height:787px;background:#0e63b3;z-index:50"></div>
<div class="a" style="left:0px;top:786px;width:1326px;height:1px;background:#0e63b3;z-index:50"></div>
</body></html>
